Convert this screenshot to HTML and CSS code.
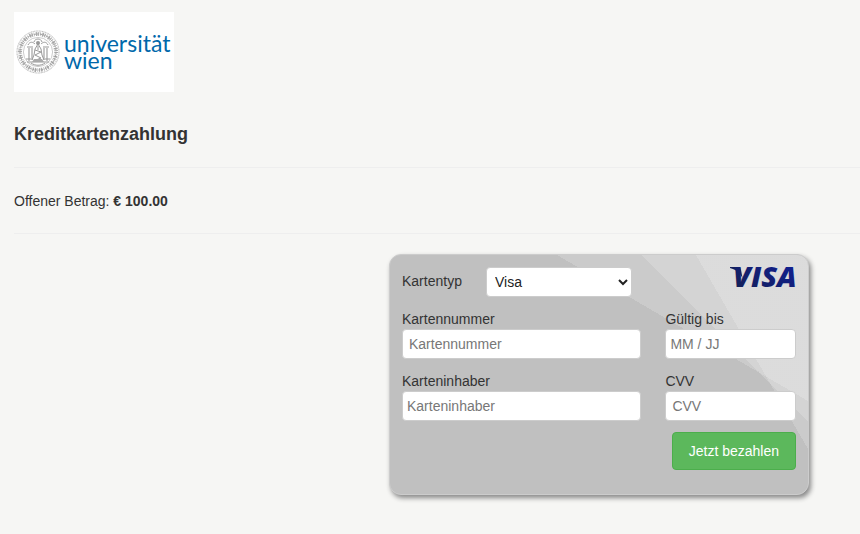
FILE: index.html
```html
<!DOCTYPE html>
<html lang="de">
<head>
    <meta charset="UTF-8">
    <meta name="viewport" content="width=device-width, initial-scale=1.0">
    <title>Kreditkartenzahlung</title>
    <link rel="stylesheet" href="styles.css">
</head>
<body>
    <header>
        <div class="logo">
            <svg class="seal" viewBox="0 0 44 44" aria-hidden="true">
                <g fill="none" stroke="#999">
                    <circle cx="22" cy="22" r="21" stroke-width="0.8" stroke-dasharray="1 0.6"/>
                    <circle cx="22" cy="22" r="18" stroke="#aaa" stroke-width="4" stroke-dasharray="1 1 0.6 1.4 1.6 0.9"/>
                    <circle cx="22" cy="22" r="18" stroke="#999" stroke-width="1" stroke-dasharray="2 1.2"/>
                    <circle cx="22" cy="22" r="14.6" stroke-width="0.6" stroke="#aaa"/>
                    <path d="M11 17h6M27 17h6M11 32h22M10 29h5M29 29h5M13 18v13M16 18v12M28 18v12M31 18v13" stroke-width="1.1"/>
                    <path d="M12 15c2-4 5-3 7-1M32 15c-2-4-5-3-7-1M18 12c1-4 7-4 8 0M15 33c4 3 10 3 14 0" stroke-width="1"/>
                    <path d="M22 14l-3 5-1 6-2 5M22 14l3 5 1 6 2 5M19 20l6 2-6 3 6 3-5 2M22 16v4" stroke-width="1"/>
                </g>
                <circle cx="22" cy="13" r="2" fill="#999"/>
                <path d="M18 29h8l2 3H16z" fill="#aaa"/>
            </svg>
            <div class="logo-text">universität<br>wien</div>
        </div>
    </header>

    <main>
        <h1>Kreditkartenzahlung</h1>
        <hr>
        <p class="amount">Offener Betrag: <strong>€ 100.00</strong></p>
        <hr>

        <div class="payment">
            <form class="card">
                <div class="card-head">
                    <label for="type">Kartentyp</label>
                    <select id="type">
                        <option>Visa</option>
                        <option>Mastercard</option>
                    </select>
                    <svg class="brand" viewBox="0 0 66 22" role="img" aria-label="Visa">
                        <defs>
                            <linearGradient id="blue" x1="0" y1="1" x2="1" y2="0">
                                <stop offset="0" stop-color="#14204f"/>
                                <stop offset="1" stop-color="#101f9c"/>
                            </linearGradient>
                        </defs>
                        <path d="M0 0h8c2 0 2.600 1 3 3l1.500 8C10 6 6 2.500 0 1z" fill="#14205c"/>
                        <text x="3" y="20" fill="url(#blue)">VISA</text>
                    </svg>
                </div>
                <div class="fields">
                    <div class="field">
                        <label for="number">Kartennummer</label>
                        <input type="text" id="number" class="numeric" placeholder="Kartennummer">
                    </div>
                    <div class="field">
                        <label for="expiry">Gültig bis</label>
                        <input type="text" id="expiry" placeholder="MM / JJ">
                    </div>
                    <div class="field">
                        <label for="holder">Karteninhaber</label>
                        <input type="text" id="holder" placeholder="Karteninhaber">
                    </div>
                    <div class="field">
                        <label for="cvv">CVV</label>
                        <input type="text" id="cvv" class="numeric" placeholder="CVV">
                    </div>
                </div>
                <button type="submit" class="pay">Jetzt bezahlen</button>
            </form>
        </div>
    </main>
</body>
</html>
```

FILE: styles.css
```css
* {
    box-sizing: border-box;
}
body {
    font-family: "Liberation Sans", Arial, sans-serif;
    font-size: 14px;
    line-height: 20px;
    margin: 0;
    padding: 12px 0 12px 14px;
    background-color: #f6f6f4;
    color: #333;
}
.logo {
    display: inline-flex;
    align-items: center;
    gap: 4px;
    width: 160px;
    height: 80px;
    padding-left: 2px;
    background-color: #fff;
    vertical-align: top;
}
.seal {
    flex: none;
    width: 44px;
    height: 44px;
}
.logo-text {
    font-family: Lato, sans-serif;
    font-size: 23px;
    line-height: 17px;
    color: #0068aa;
}
h1 {
    font-size: 18px;
    line-height: 20px;
    margin: 32px 0 23px;
}
hr {
    border: 0;
    border-top: 1px solid #eee;
    margin: 20px 0;
}
.amount {
    line-height: 26px;
    margin: 0 0 -1px;
}
.payment {
    display: flex;
    justify-content: flex-end;
    padding-right: 51px;
}
.card {
    flex: 1;
    max-width: 420px;
    padding: 12px 12px 24px;
    border: 1px solid #ccc;
    border-radius: 12px;
    box-shadow: 2px 3px 5px #888;
    /* three overlapping light rays falling in from the top right corner */
    background-color: #c0c0c0;
    background-image:
        linear-gradient(to top right, transparent 50%, rgba(255, 255, 255, 0.18) 50%),
        linear-gradient(to top right, transparent 50%, rgba(255, 255, 255, 0.18) 50%),
        linear-gradient(to top right, transparent 50%, rgba(255, 255, 255, 0.18) 50%);
    background-position: top right;
    background-repeat: no-repeat;
    background-size: 251px 146px, 166px 166px, 112px 194px;
}
.card-head {
    display: flex;
    align-items: flex-start;
    margin-bottom: 12px;
}
.card-head label {
    flex: none;
    width: 84px;
    line-height: 28px;
}
.card-head select {
    width: 146px;
    padding: 0 4px;
}
.brand {
    width: 66px;
    height: 22px;
    margin-left: auto;
    overflow: visible;
}
.brand text {
    font: italic 800 29px "Open Sans", sans-serif;
}
.fields {
    display: grid;
    grid-template-columns: 11fr 6fr;
    gap: 12px 24px;
}
.field label {
    display: block;
}
input, select {
    display: block;
    width: 100%;
    height: 30px;
    padding: 0 4px;
    border: 1px solid #ccc;
    border-radius: 4px;
    background-color: #fff;
    color: #222;
    font: inherit;
}
.numeric {
    padding: 0 6px;
}
input::placeholder {
    color: #777;
}
.pay {
    display: block;
    height: 38px;
    margin: 11px 0 0 auto;
    padding: 0 16px;
    border: 1px solid #4cae4c;
    border-radius: 4px;
    background-color: #5cb85c;
    color: #fff;
    font: inherit;
}
```
